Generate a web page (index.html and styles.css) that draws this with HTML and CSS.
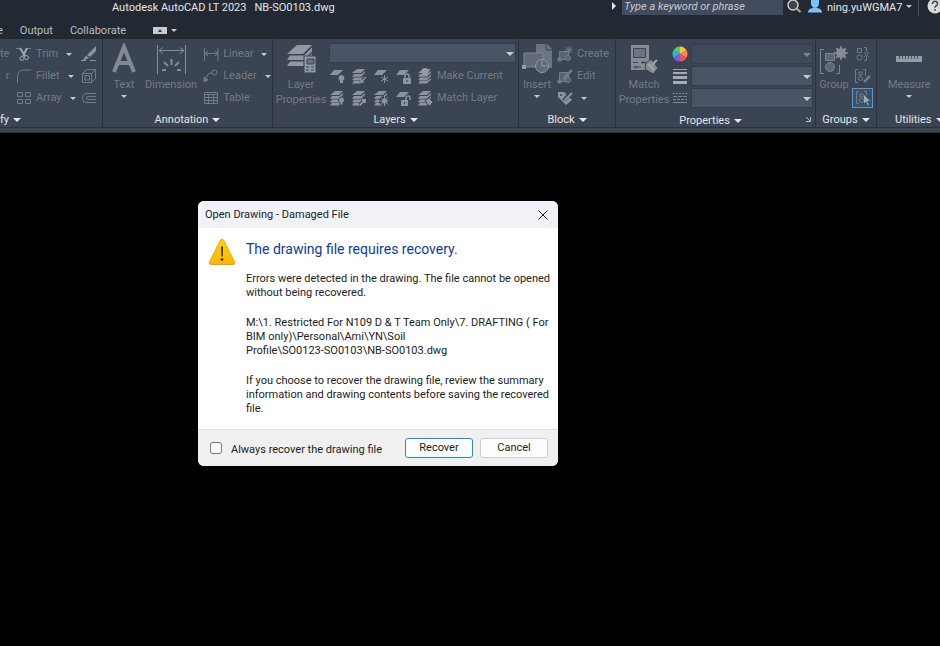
FILE: index.html
```html
<!DOCTYPE html>
<html lang="en">
<head>
<meta charset="utf-8">
<title>Autodesk AutoCAD LT 2023</title>
<link rel="stylesheet" href="styles.css">
</head>
<body>
<svg class="defs" width="0" height="0" aria-hidden="true">
  <symbol id="sheet" viewBox="0 0 16 16"><path d="M5 2h9L9 7H1z"/></symbol>
  <symbol id="stack" viewBox="0 0 16 16"><path d="M6 1h8l-4 4H1zM3 6h7.500L14 3v1.700L10 8.700H1zM3 9.400h7.500L14 6.500v1.700l-4 4H1zM3 12.800h7.500L14 10v1.500L10 15.500H1z"/></symbol>
  <symbol id="bulb" viewBox="0 0 16 16"><path d="M12.500 7a3 3 0 0 1 1.500 5.600V15h-3v-2.400A3 3 0 0 1 12.500 7z"/></symbol>
</svg>

<header class="titlebar">
  <h1 class="app-name">Autodesk AutoCAD LT 2023</h1>
  <span class="file-name">NB-SO0103.dwg</span>
  <svg class="expander" width="5" height="8" viewBox="0 0 5 8"><path d="M0 0l4 4-4 4z" fill="#e4e6e9"/></svg>
  <input class="search" type="text" placeholder="Type a keyword or phrase" aria-label="Search">
  <button class="plain find" aria-label="Find">
    <svg width="16" height="16" viewBox="0 0 16 16" fill="none"><circle cx="6" cy="5" r="5" fill="#3b4350" stroke="#c6cace" stroke-width="1.500"/><path d="M9.500 8.500l4 3.500" stroke="#c9a77b" stroke-width="2"/></svg>
  </button>
  <button class="plain account">
    <svg width="16" height="16" viewBox="0 0 16 16" fill="#7cc4f8"><path d="M4 0h8v4q-1 4-4 4T4 4zM1 12.500Q1 8.500 6 8h4q5 .5 5 4.500z"/></svg>
    <span>ning.yuWGMA7</span><i class="caret small"></i>
  </button>
  <button class="plain help" aria-label="Help"><svg width="16" height="16" viewBox="0 0 16 16" fill="none"><circle cx="8" cy="6" r="7.500" fill="#d9dbdd"/><path d="M5.500 4q0-2.700 2.500-2.700T10.500 4Q10.500 5.300 9 6q-1 .6-1 1.800M8 9v1.800" stroke="#41474f" stroke-width="1.500"/></svg></button>
</header>

<nav class="tabs">
  <a class="cut" href="#">e</a>
  <a href="#">Output</a>
  <a href="#">Collaborate</a>
  <button class="plain minimize" aria-label="Minimize ribbon">
    <svg width="14" height="7" viewBox="0 0 14 7"><path fill="#c8cacd" d="M0 0h14v7H0z"/><path fill="#343b46" d="M5 5l2-3 2 3z"/></svg>
    <i class="caret small"></i>
  </button>
</nav>

<section class="ribbon">
  <div class="panel modify">
    <div class="body">
      <div class="rows clipped"><span>te</span><span>r</span></div>
      <div class="rows tools">
        <button><svg width="16" height="16" viewBox="0 0 16 16" fill="none" stroke="currentColor"><path d="M0 2.500h5m6 0h4" /><path d="M4 2l5 8M11 2L7 10" stroke="#a0a6ae" stroke-width="2"/><circle cx="6" cy="12.500" r="2" stroke="#a0a6ae"/><circle cx="10.500" cy="11.500" r="2" stroke="#a0a6ae"/></svg><span>Trim</span><i class="caret small gap"></i></button>
        <button><svg width="16" height="16" viewBox="0 0 16 16" fill="none" stroke="currentColor"><path d="M1.500 15V9q0-7 7-7H15"/></svg><span>Fillet</span><i class="caret small gap"></i></button>
        <button><svg width="16" height="16" viewBox="0 0 16 16" fill="none" stroke="currentColor"><path d="M1.500 2.500h5v4h-5zM9.500 2.500h5v4h-5zM1.500 9.500h5v4h-5zM9.500 9.500h5v4h-5z"/></svg><span>Array</span><i class="caret small gap"></i></button>
      </div>
      <div class="rows tools">
        <button aria-label="Erase"><svg width="16" height="16" viewBox="0 0 16 16" fill="#8c939c"><path d="M15 0v5l-6 6-3-2zM5 9.500l3 2.500-4 2H2zM0 14h5v1H0zM9 14h6v1H9z"/></svg></button>
        <button aria-label="Explode"><svg width="16" height="16" viewBox="0 0 16 16" fill="none" stroke="currentColor"><path d="M1.500 5.500h9v9h-9zM1.500 5.500l4-4h9v9l-4 4M10.500 5.500l4-4M4 7.500h4.500v4.500H4z"/></svg></button>
        <button aria-label="Offset"><svg width="16" height="16" viewBox="0 0 16 16" fill="none" stroke="currentColor"><path d="M15 3.500H6Q1.500 3.500 1.500 8T6 12.500h9M15 6.500H7Q5.500 6.500 5.500 8T7 9.500h8"/></svg></button>
      </div>
    </div>
    <button class="title"><span>fy</span><i class="caret"></i></button>
  </div>

  <div class="panel annotation">
    <div class="body">
      <button class="big"><svg width="30" height="34" viewBox="0 0 30 34" fill="none" stroke="#828993" stroke-width="4"><path d="M5 29L15 4l10 25M8.500 20h13"/></svg><span>Text</span><i class="caret small"></i></button>
      <button class="big"><svg width="32" height="34" viewBox="0 0 32 34" fill="none" stroke="#858c96"><path d="M2.500 2v29M30.500 2v29" /><path d="M4 7.500h25M8 4.500l-4 3 4 3M25 4.500l4 3-4 3"/><path d="M16.500 16v6M9 19l4 4M24 19l-4 4M7 27h4M22 27h4" stroke-width="2"/></svg><span>Dimension</span></button>
      <div class="rows tools">
        <button><svg width="16" height="16" viewBox="0 0 16 16" fill="none" stroke="currentColor"><path d="M1.500 2v13M15 2v13M2 7.500h13M5 5L2 7.500 5 10M12 5l3 2.500L12 10"/></svg><span>Linear</span><i class="caret small gap"></i></button>
        <button><svg width="16" height="16" viewBox="0 0 16 16" fill="none" stroke="currentColor"><circle cx="11.500" cy="4.500" r="2.500"/><path d="M9 5Q4 5 4 9l-2 3"/><path d="M1 9v5l4-2z" fill="currentColor"/></svg><span>Leader</span><i class="caret small gap"></i></button>
        <button><svg width="16" height="16" viewBox="0 0 16 16" fill="none" stroke="currentColor"><path d="M1.500 2.500h13v11h-13zM1 4.500h14M1 7.500h14M1 10.500h14M5.500 5v9M10.500 5v9"/></svg><span>Table</span></button>
      </div>
    </div>
    <button class="title"><span>Annotation</span><i class="caret"></i></button>
  </div>

  <div class="panel layers">
    <div class="body">
      <button class="big"><svg width="30" height="34" viewBox="0 0 30 34" fill="#9298a1"><path d="M11 2h15l-9 9H1z"/><path d="M4 12.500h14l8-8v4l-8.500 8.500H1zM4 18.500h14l8-8v4l-8.500 8.500H1z"/><path d="M18 13h12v17H18z" stroke="#3c4453"/><path d="M21 16h7v5h-7z" fill="#687180" stroke="#3c4453"/><path d="M20 24h3m2 0h3m-8 3h3m2 0h3" stroke="#3c4453"/></svg><span>Layer<br>Properties</span></button>
      <div class="layer-side">
        <div class="combo"><select aria-label="Layer"><option></option></select></div>
        <div class="strip">
          <button aria-label="Layer off"><svg width="16" height="16" fill="currentColor"><use href="#sheet"/><use href="#bulb"/></svg></button>
          <button aria-label="Isolate"><svg width="16" height="16" fill="currentColor"><use href="#stack"/><path d="M15 8l-5 7" stroke="#3c4453" stroke-width="4"/><path d="M15 9l-5 5m0-3v3h3" stroke="currentColor" stroke-width="1.500" fill="none"/></svg></button>
          <button aria-label="Freeze"><svg width="16" height="16" fill="currentColor" stroke="currentColor"><use href="#sheet" stroke="none"/><path d="M11.500 7v8M8 9l7 4M8 13l7-4"/></svg></button>
          <button aria-label="Lock"><svg width="16" height="16" fill="currentColor"><use href="#sheet"/><path d="M8 10h8v6H8z"/><path d="M10 10V8q0-2 2-2t2 2v2" stroke="currentColor" fill="none" stroke-width="1.500"/><path d="M12 12v2" stroke="#3c4453"/></svg></button>
          <button><svg width="16" height="16" fill="currentColor"><use href="#stack"/><circle cx="8" cy="3.500" r="3.500" fill="#979da6"/></svg><span>Make Current</span></button>
        </div>
        <div class="strip">
          <button aria-label="Turn all layers on"><svg width="16" height="16" fill="currentColor"><use href="#stack"/><use href="#bulb" stroke="#3c4453"/></svg></button>
          <button aria-label="Unisolate"><svg width="16" height="16" fill="currentColor"><use href="#stack"/><path d="M15 8l-6 7" stroke="#3c4453" stroke-width="4"/><path d="M9 15l5-5m-3 0h3v3" stroke="#a0a5ac" stroke-width="1.500" fill="none"/></svg></button>
          <button aria-label="Thaw all layers"><svg width="16" height="16" fill="currentColor"><use href="#stack"/><circle cx="11" cy="11" r="5" fill="#3c4453"/><path d="M11.500 6v10M6.500 11h9M8 7.500l7 7M15 7.500l-7 7" stroke="currentColor"/><circle cx="11.500" cy="11" r="2.500"/></svg></button>
          <button aria-label="Unlock"><svg width="16" height="16" fill="currentColor"><use href="#sheet"/><path d="M6 10h7v6H6z"/><path d="M11 10V8q0-2 2-2t2 2v2" stroke="currentColor" fill="none" stroke-width="1.500"/><path d="M9.500 12v2" stroke="#3c4453"/></svg></button>
          <button><svg width="16" height="16" fill="currentColor"><use href="#stack"/><path d="M8 10l4-2 4 4-3 4-2-1z" stroke="#3c4453"/></svg><span>Match Layer</span></button>
        </div>
      </div>
    </div>
    <button class="title"><span>Layers</span><i class="caret"></i></button>
  </div>

  <div class="panel block">
    <div class="body">
      <button class="big"><svg width="30" height="34" viewBox="0 0 30 34" fill="#6c7480"><path d="M14 1h11l5 5v19H14z"/><path d="M24 1v6h6" fill="none" stroke="#3c4453"/><path d="M2 10h19v14H2z" stroke="#7f8791" fill="#626a77"/><circle cx="20" cy="23" r="6.500" fill="#626a77" stroke="#949aa3"/><path d="M20 18v5h5" fill="none" stroke="#949aa3"/><path d="M0 22h4v4H0z" fill="#949aa3"/></svg><span>Insert</span><i class="caret small"></i></button>
      <div class="rows tools">
        <button><svg width="16" height="16" fill="none" stroke="currentColor"><path d="M2.500 5.500h9v8h-9z" fill="#59616e"/><circle cx="11" cy="12" r="2.500" fill="#59616e"/><path d="M12 0v8M8 4h8M9 1l6 6M15 1L9 7"/><path d="M1 12h3v3H1z" fill="currentColor"/></svg><span>Create</span></button>
        <button><svg width="16" height="16" fill="none" stroke="currentColor"><path d="M2.500 4.500h9v9h-9z" fill="#59616e"/><circle cx="11" cy="12" r="2.500" fill="#59616e"/><path d="M15 2L8 9l-1 3" stroke-width="2.500"/><path d="M1 12h3v3H1z" fill="currentColor"/></svg><span>Edit</span></button>
        <button aria-label="Edit attributes"><svg width="16" height="16" fill="#8c939c"><path d="M1 2h6l8 8-6 5-8-8z"/><circle cx="4" cy="5" r="1" fill="#3c4453"/><path d="M15 2L9 8l-2 3" stroke="#3c4453" stroke-width="4"/><path d="M15 3L9 9l-2 3" stroke="#8c939c" stroke-width="2" fill="none"/></svg><i class="caret small gap"></i></button>
      </div>
    </div>
    <button class="title"><span>Block</span><i class="caret"></i></button>
  </div>

  <div class="panel properties">
    <div class="body">
      <button class="big"><svg width="30" height="34" viewBox="0 0 30 34" fill="#858c96"><path d="M2 2h18v25H2z"/><path d="M4.500 5.500h12v9h-12z" fill="#6c7480" stroke="#3c4453"/><path d="M4 19.500h5m3 0h6M4 24h8m2-6v3m-7 2v3" stroke="#3c4453"/><path d="M17 20l5-4 7 9-5 6-8-5z" stroke="#3c4453"/><path d="M23 22l5-5M19 21l6 6" stroke="#a1a6ae" stroke-width="2"/></svg><span>Match<br>Properties</span></button>
      <div class="rows kinds">
        <svg width="16" height="16" viewBox="-8 -8 16 16"><path d="M0 0V-7.500A7.500 7.500 0 0 1 6.500-3.700z" fill="#ffc247"/><path d="M0 0L6.500-3.700A7.500 7.500 0 0 1 6.500 3.700z" fill="#ff8a45"/><path d="M0 0L6.500 3.700A7.500 7.500 0 0 1 0 7.500z" fill="#ef5068"/><path d="M0 0V7.500A7.500 7.500 0 0 1-6.500 3.700z" fill="#7b58ef"/><path d="M0 0L-6.500 3.700A7.500 7.500 0 0 1-6.500-3.700z" fill="#28b5dc"/><path d="M0 0L-6.500-3.700A7.500 7.500 0 0 1 0-7.500z" fill="#50cb73"/></svg>
        <svg width="16" height="16" fill="#a6abb2"><path d="M1 1h14v1H1zM1 4h14v2H1zM1 8h14v3H1zM1 13h14v3H1z"/></svg>
        <svg width="16" height="16" fill="none" stroke="#828994"><path d="M1 3.500h14" stroke-dasharray="2 1"/><path d="M1 6.500h14" stroke-dasharray="4 1"/><path d="M1 9.500h14" stroke-dasharray="3 1"/><path d="M1 12.500h14"/></svg>
      </div>
      <div class="rows combos">
        <div class="combo dim"><select aria-label="Object colour"><option></option></select></div>
        <div class="combo"><select aria-label="Lineweight"><option></option></select></div>
        <div class="combo"><select aria-label="Linetype"><option></option></select></div>
      </div>
    </div>
    <div class="title-row">
      <button class="title"><span>Properties</span><i class="caret"></i></button>
      <button class="plain launcher" aria-label="Properties palette"><svg width="6" height="6" fill="none" stroke="#b3b8bf"><path d="M1 1l4 4M5.500 1v4.500H1"/></svg></button>
    </div>
  </div>

  <div class="panel groups">
    <div class="body">
      <button class="big"><svg width="30" height="34" viewBox="0 0 30 34" fill="#5f6774" stroke="#7f8690"><path d="M5 6.500H1.500v24H5M17 30.500h3.500V22" fill="none"/><path d="M6.500 10.500h9v7h-9z"/><circle cx="11" cy="24" r="4.500"/><path d="M22 2l1.500 4 4-1.500L26 8.500l4 1.500-4 1.500 1.500 4-4-1.500L22 18l-1.500-4-4 1.500 1.500-4-4-1.500 4-1.500-1.500-4 4 1.500z" fill="#858c96" stroke="none"/></svg><span>Group</span></button>
      <div class="rows tools">
        <button aria-label="Ungroup"><svg width="16" height="16" fill="none" stroke="currentColor"><path d="M2.500 2.500h4v4h-4zM9 1.500h2.500V6M9 14.500h2.500V10M9 6l5 5m0-5l-5 5"/><circle cx="4.500" cy="11.500" r="2.500"/></svg></button>
        <button aria-label="Group edit"><svg width="16" height="16" fill="none" stroke="currentColor"><path d="M3 1.500H.5v13H3M8 1.500h2.500V8M4 4h3v3H4z"/><circle cx="5.500" cy="10.500" r="2"/><path d="M15 8l-6 6" stroke-width="2.500"/></svg></button>
        <button class="active" aria-label="Group selection on/off"><svg width="16" height="16" fill="none" stroke="currentColor"><path d="M4 1.500H1.500v12H4M9 1.500h2.500V5M5 4h3v3H5z"/><circle cx="6.500" cy="10.500" r="2"/><path d="M9 5l6 6h-3l2 4-1 .5-2-4-2 2z" fill="#a3abb5" stroke="none"/></svg></button>
      </div>
    </div>
    <button class="title"><span>Groups</span><i class="caret"></i></button>
  </div>

  <div class="panel utilities">
    <div class="body">
      <button class="big"><svg width="30" height="34" viewBox="0 0 30 34"><path d="M2 13h26v6H2z" fill="#969ca4"/><path d="M5.500 13v3m3-3v3m3-3v3m3-3v3m3-3v3m3-3v3m3-3v3" stroke="#4d5562"/></svg><span>Measure</span><i class="caret small"></i></button>
    </div>
    <button class="title"><span>Utilities</span><i class="caret"></i></button>
  </div>
</section>

<main class="canvas">
  <section class="dialog" role="dialog" aria-labelledby="dialog-title">
    <header class="dialog-bar">
      <h2 id="dialog-title">Open Drawing - Damaged File</h2>
      <button class="plain" aria-label="Close"><svg width="10" height="10" fill="none" stroke="#222"><path d="M.5.5l9 9M9.500.5l-9 9"/></svg></button>
    </header>
    <div class="message">
      <svg width="28" height="28" viewBox="0 0 28 28"><defs><linearGradient id="amber" x2="0" y2="1"><stop stop-color="#ffd800"/><stop offset="1" stop-color="#f9b40c"/></linearGradient></defs><path d="M12.500 2q1.500-2 3 0l11 22q.8 2.500-1.500 2.500H3Q.7 26.500 1.500 24z" fill="url(#amber)" stroke="#e9a400"/><path d="M13.200 8.500h1.800l-.3 10h-1.200z" fill="#342200"/><circle cx="14" cy="21.500" r="1.300" fill="#342200"/></svg>
      <div class="copy">
        <h3>The drawing file requires recovery.</h3>
        <p>Errors were detected in the drawing. The file cannot be opened<br>without being recovered.</p>
        <p>M:\1. Restricted For N109 D &amp; T Team Only\7. DRAFTING ( For<br>BIM only)\Personal\Ami\YN\Soil<br>Profile\SO0123-SO0103\NB-SO0103.dwg</p>
        <p>If you choose to recover the drawing file, review the summary<br>information and drawing contents before saving the recovered<br>file.</p>
      </div>
    </div>
    <footer class="actions">
      <input type="checkbox" id="always"><label for="always">Always recover the drawing file</label>
      <button class="primary">Recover</button>
      <button>Cancel</button>
    </footer>
  </section>
</main>
</body>
</html>
```

FILE: styles.css
```css
* { box-sizing: border-box; }

body {
  display: flex;
  flex-direction: column;
  min-height: 100vh;
  margin: 0;
  overflow: hidden;
  background: #000;
  color: #e3e5e8;
  font: 11px/14px Roboto, "Noto Sans", sans-serif;
}

h1, h2, h3, p { margin: 0; font-size: inherit; font-weight: 400; }
svg { display: block; flex: none; }
.defs { position: absolute; }
button, input, select { font: inherit; color: inherit; }
button { display: flex; align-items: center; padding: 0; border: 0; background: none; white-space: nowrap; }

.caret {
  flex: none;
  width: 0;
  border: 4px solid transparent;
  border-top-color: #e3e5e8;
  border-bottom: 0;
}
.caret.small { border-width: 3px 3px 0; border-top-color: #c6cad0; }

/* Title bar */
.titlebar { display: flex; height: 16px; padding-left: 112px; line-height: 15px; background: #222933; }
.file-name { margin-left: 8px; }
.expander { margin: 2px 5px 0 auto; }
.search {
  width: 161px;
  height: 15px;
  padding: 0 2px 2px;
  border: 0;
  background: #434c5e;
  font-style: italic;
}
.search::placeholder { color: #c5c9d0; opacity: 1; }
.find { align-items: flex-start; margin-left: 4px; }
.account { align-items: flex-start; gap: 4px; width: 112px; margin-left: 4px; border-right: 1px solid #4a515c; }
.account .caret { margin-top: 5px; }
.help { width: 21px; padding-left: 8px; overflow: hidden; align-items: flex-start; }

/* Ribbon tabs */
.tabs { display: flex; align-items: center; gap: 17px; height: 23px; padding-top: 6px; background: #222933; }
.tabs a { color: #b9bdc3; text-decoration: none; }
.tabs .cut { margin-left: -3px; }
.minimize { gap: 4px; margin-left: 10px; }

/* Ribbon */
.ribbon {
  display: flex;
  height: 94px;
  padding-bottom: 4px;
  background: #3b4453;
  border-bottom: 1px solid #2b323d;
}
.panel {
  display: flex;
  flex: none;
  flex-direction: column;
  overflow: hidden;
  border-right: 1px solid #2b323d;
  border-bottom: 1px solid #2b323d;
}
.body { display: flex; height: 70px; padding-top: 4px; color: #727b88; }
.rows { display: grid; grid-template-rows: repeat(3, 22px); align-items: center; }
.tools button { gap: 4px; }
.tools .gap { margin-left: 4px; }
.big { flex-direction: column; align-self: flex-start; white-space: normal; }
.big .caret { margin-top: 3px; }
.big span { line-height: 15px; }
.title { justify-content: center; gap: 4px; height: 19px; padding-top: 4px; color: #e3e5e8; }

.modify { width: 103px; }
.modify .clipped { width: 16px; padding-right: 9px; justify-items: end; }
.modify .tools:nth-child(2) { width: 65px; }
.modify .title { align-self: flex-start; }

.annotation { width: 170px; }
.annotation .body { gap: 6px; padding-left: 6px; }

.layers { width: 246px; }
.layers .body { gap: 3px; padding-left: 3px; padding-right: 2px; }
.layers .big { width: 50px; }
.layer-side { flex: 1; }
.layer-side .combo { height: 22px; }
.strip { display: flex; align-items: center; gap: 6px; height: 22px; }
.strip button { gap: 4px; }
.strip svg { color: #8c939c; }

.block { width: 97px; }
.block .body { gap: 5px; padding-left: 3px; }

.properties { flex: 1; }
.properties .body { padding: 4px 2px 0 3px; gap: 3px; }
.properties .big { width: 50px; }
.combos { flex: 1; }
.title-row { display: flex; padding-right: 4px; }
.title-row .title { flex: 1; }

.combo { position: relative; }
.combo select {
  display: block;
  width: 100%;
  height: 20px;
  border: 1px solid #353d4a;
  background: #495467;
  appearance: none;
}
.combo.dim select { background: #404959; }
.combo::after {
  content: "";
  position: absolute;
  top: 9px;
  right: 2px;
  border: 4px solid transparent;
  border-top-color: #c6cad0;
  border-bottom: 0;
}
.combo.dim::after { border-top-color: #7c8490; }

.groups { width: 61px; }
.groups .body { padding-left: 3px; gap: 3px; }
.groups .tools button { width: 21px; height: 20px; justify-content: center; }
.groups .active { border: 1px solid #5897c9; background: #3d5068; }

.utilities { width: 63px; border-right: 0; }
.utilities .big { margin-left: 11px; }
.utilities .title { align-self: flex-start; margin-left: 18px; }

/* Drawing area and dialog */
.canvas { position: relative; flex: 1; background: #000; }
.dialog {
  position: absolute;
  top: 68px;
  left: 198px;
  width: 360px;
  overflow: hidden;
  border-radius: 6px;
  background: #fff;
  color: #1c1c1c;
}
.dialog-bar {
  display: flex;
  align-items: center;
  justify-content: space-between;
  height: 27px;
  padding: 0 10px 0 7px;
  background: #f1f2f8;
}
.message { display: flex; gap: 10px; padding: 10px 10px 13px; }
.copy { flex: 1; white-space: nowrap; }
.copy h3 { margin-bottom: 12px; color: #0f3a9c; font-size: 14px; line-height: 22px; }
.copy p + p { margin-top: 16px; }
.actions {
  display: flex;
  align-items: center;
  height: 37px;
  padding: 0 10px 0 12px;
  border-top: 1px solid #dfdfdf;
  background: #f0f0f0;
}
.actions input {
  width: 12px;
  height: 12px;
  margin: 0 9px 0 0;
  border: 1px solid #777;
  border-radius: 3px;
  background: #f8f8f8;
  appearance: none;
}
.actions label { flex: 1; padding-top: 3px; }
.actions button {
  justify-content: center;
  width: 68px;
  height: 20px;
  margin-left: 7px;
  border: 1px solid #d0d0d0;
  border-radius: 3px;
  background: #fdfdfd;
}
.actions .primary { border-color: #2a86d2; }
```
